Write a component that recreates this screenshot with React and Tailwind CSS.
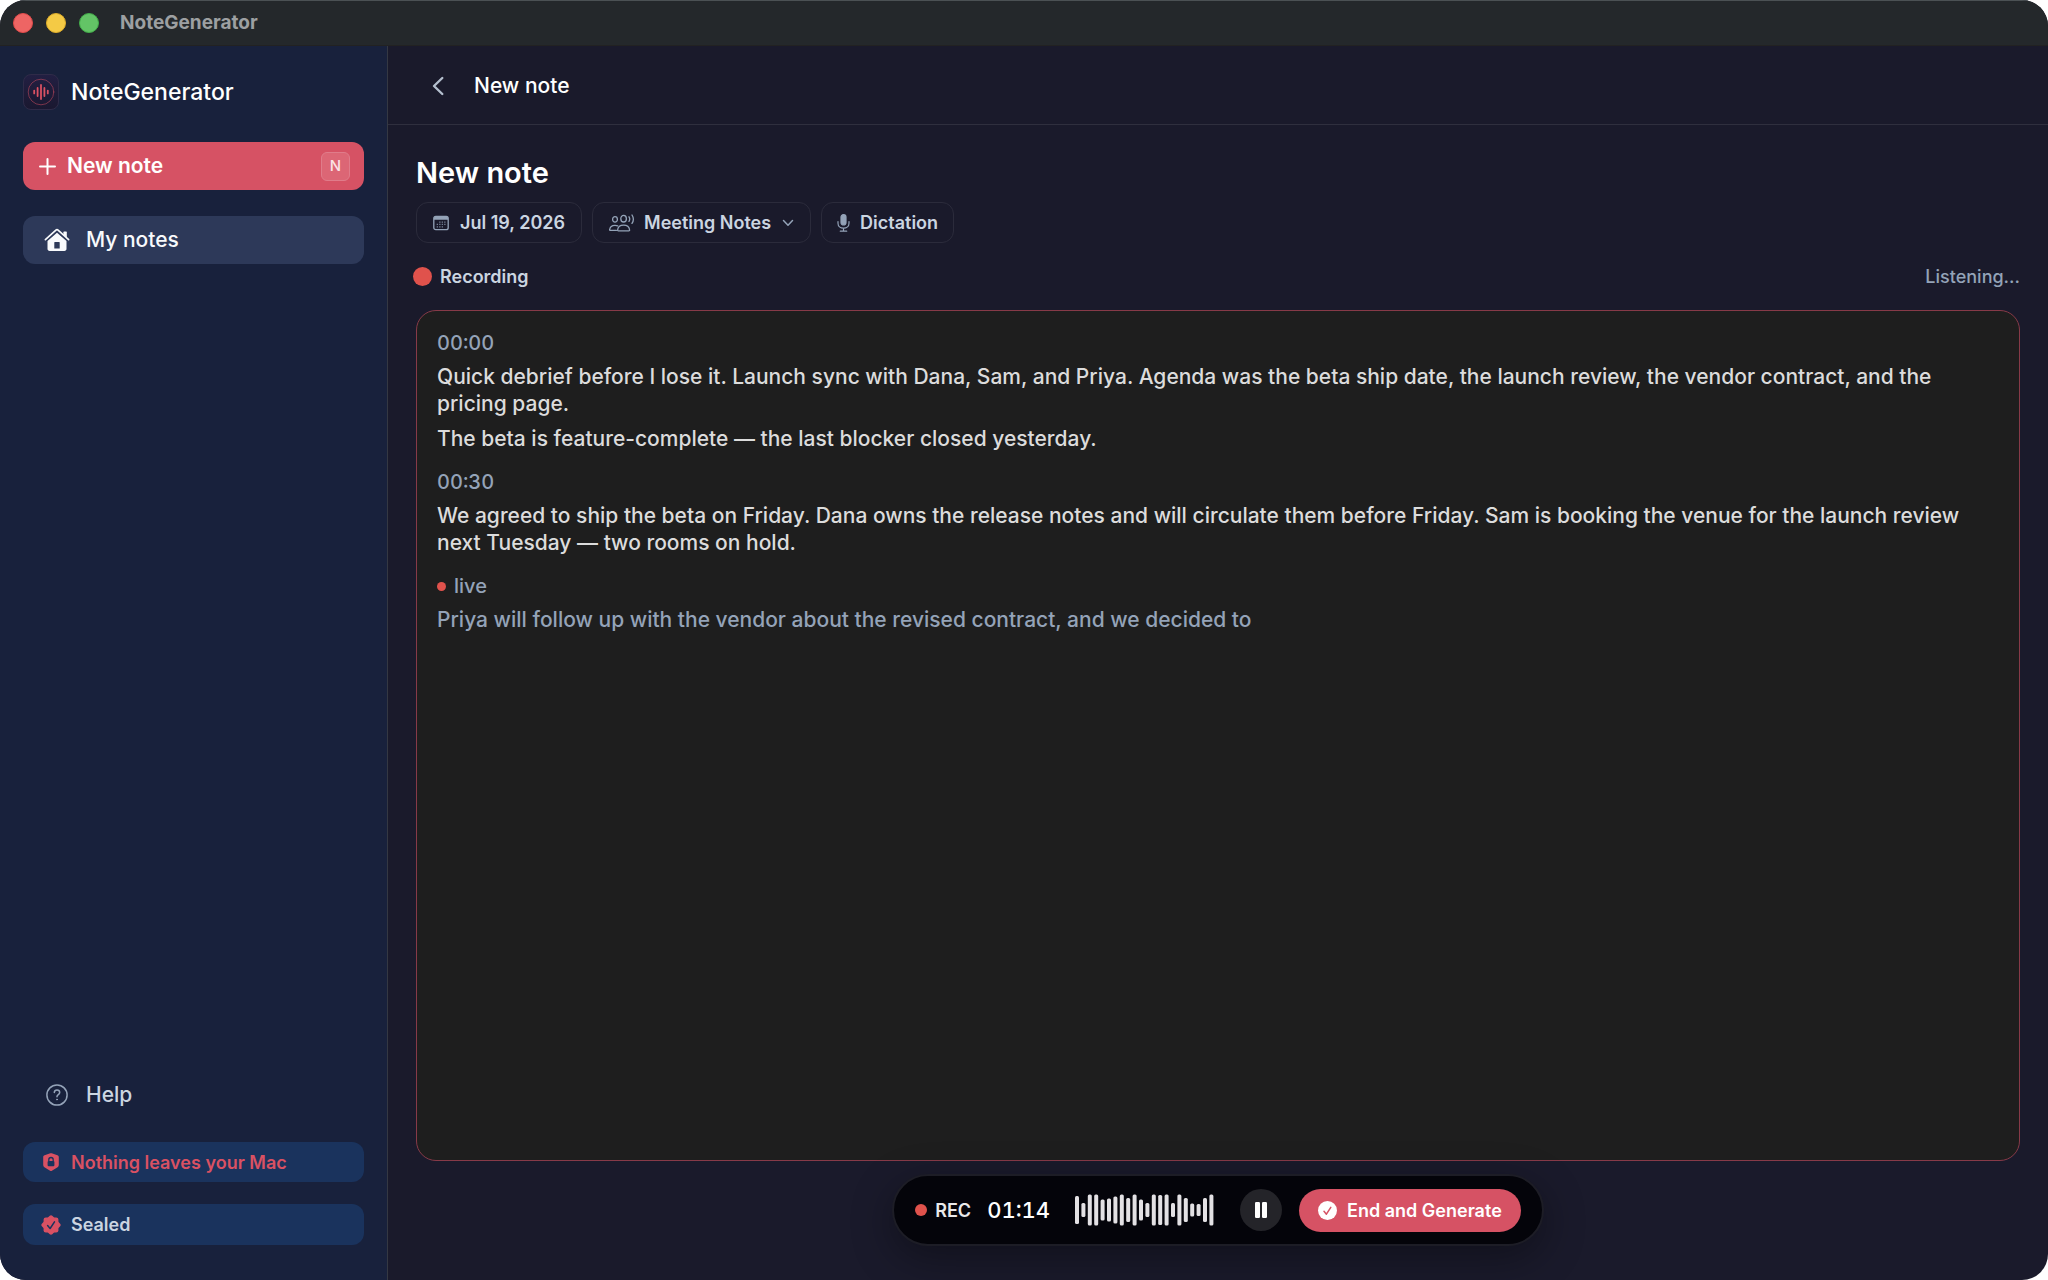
import React from "react";

const CalendarIcon = () => (
  <svg width="16" height="16" viewBox="0 0 16 16" fill="none" aria-hidden="true">
    <rect x="0.8" y="1.3" width="14.4" height="13.4" rx="2" stroke="currentColor" strokeWidth="1.3" />
    <path d="M1 3a2 2 0 0 1 2-2h10a2 2 0 0 1 2 2v1.8H1z" fill="currentColor" />
    <g fill="currentColor" opacity="0.75">
      <path d="M6.2 6.4h1.3v1.3H6.2zM8.7 6.4H10v1.3H8.7zM11.2 6.4h1.3v1.3h-1.3zM3.7 8.8H5v1.3H3.7zM6.2 8.8h1.3v1.3H6.2zM8.7 8.8H10v1.3H8.7zM11.2 8.8h1.3v1.3h-1.3zM3.7 11.2H5v1.3H3.7zM6.2 11.2h1.3v1.3H6.2zM8.7 11.2H10v1.3H8.7z" />
    </g>
  </svg>
);

const PeopleIcon = () => (
  <svg width="26" height="18" viewBox="0 0 26 18" fill="none" stroke="currentColor" strokeWidth="1.3" strokeLinecap="round" strokeLinejoin="round" aria-hidden="true">
    <ellipse cx="6" cy="5.4" rx="2.4" ry="2.8" />
    <path d="M7.4 16.4H1.3C.8 16.4 .6 16 .7 15.500 1 12.900 3.200 11.300 6 11.300c1 0 1.900.2 2.700.6" />
    <ellipse cx="14.6" cy="4.700" rx="2.800" ry="3.300" />
    <path d="M9.400 16.800h10.400c.6 0 .9-.3.8-.9-.4-2.900-2.800-4.700-6-4.700s-5.600 1.800-6 4.700c-.1.600.200.9.8.9z" />
    <path d="M20 2.800c.9 1.400.9 3.200 0 4.600M23 1c1.700 2.600 1.700 5.800 0 8.400" />
  </svg>
);

const MicIcon = () => (
  <svg width="13" height="18" viewBox="0 0 13 18" fill="none" stroke="currentColor" strokeWidth="1.2" strokeLinecap="round" aria-hidden="true">
    <rect x="4" y="0.600" width="5" height="10.400" rx="2.500" fill="currentColor" />
    <path d="M1 7.500v1.700c0 3 2.300 5 5.500 5s5.500-2 5.500-5V7.500M6.500 14.200v2.800M3.300 17.200h6.400" />
  </svg>
);

const HouseIcon = () => (
  <svg width="26" height="24" viewBox="0 0 26 24" aria-hidden="true">
    <path d="M1.400 11.600 11.900 2.200c.7-.6 1.500-.6 2.200 0l10.500 9.400" fill="none" stroke="currentColor" strokeWidth="1.700" strokeLinecap="round" />
    <path d="M20 3.600h2.200c.4 0 .6.2.6.6v5.200L19.400 6.300V4.200c0-.4.200-.6.6-.6z" fill="currentColor" />
    <path fillRule="evenodd" d="M13 4.700 22.500 13v7.800c0 1.300-.8 2.100-2.100 2.100H5.600c-1.300 0-2.100-.8-2.100-2.100V13zM10.300 14.500v6h5.400v-6c0-.3-.2-.5-.5-.5h-4.400c-.3 0-.5.200-.5.500z" fill="currentColor" />
  </svg>
);

const HelpIcon = () => (
  <svg width="22" height="22" viewBox="0 0 22 22" fill="none" stroke="currentColor" strokeLinecap="round" aria-hidden="true">
    <circle cx="11" cy="11" r="10.100" strokeWidth="1.500" />
    <path d="M8.300 8.500c.1-1.500 1.200-2.400 2.700-2.400s2.700.9 2.700 2.300c0 1-.5 1.600-1.400 2.200-.9.600-1.300 1-1.300 1.900v.3" strokeWidth="1.500" />
    <circle cx="11" cy="15.500" r="0.500" fill="currentColor" strokeWidth="0.900" />
  </svg>
);

const ShieldLockIcon = () => (
  <svg width="16" height="18" viewBox="0 0 16 18" aria-hidden="true">
    <path fill="#d95163" d="M8.700.3 14.400 2.200c.9.300 1.400.8 1.400 1.800v8c0 1-.4 1.700-1.200 2.200l-5.700 3.500c-.6.300-1.200.3-1.800 0l-5.700-3.500C.6 13.700.2 13 .2 12V4c0-1 .5-1.500 1.400-1.800L7.300.3c.5-.2.900-.2 1.400 0z" />
    <path d="M5.800 8.300V6.700a2.200 2.200 0 0 1 4.400 0v1.600" fill="none" stroke="#1a335d" strokeWidth="1.300" />
    <rect x="4.600" y="7.900" width="6.800" height="5.400" rx="1" fill="#1a335d" />
  </svg>
);

const SealIcon = () => (
  <svg width="20" height="20" viewBox="0 0 20 20" aria-hidden="true">
    <g fill="#d95163">
      <rect x="2.600" y="2.600" width="14.800" height="14.800" rx="2.200" />
      <rect x="2.600" y="2.600" width="14.800" height="14.800" rx="2.200" transform="rotate(45 10 10)" />
    </g>
    <path d="m6.600 10.600 2.500 2.900 4.400-6.700" fill="none" stroke="#1a335d" strokeWidth="1.500" strokeLinecap="round" strokeLinejoin="round" />
  </svg>
);

const LogoIcon = () => (
  <svg width="28" height="28" viewBox="0 0 28 28" fill="none" strokeLinecap="round" aria-hidden="true">
    <circle cx="14" cy="14" r="12.800" stroke="#d95163" strokeOpacity="0.500" strokeWidth="1" />
    <path d="M7.200 12.600v2.800M10.600 10v8M14 7v14M17.400 10v8M20.800 12.600v2.800" stroke="#d95163" strokeWidth="1.800" />
  </svg>
);

const levels = [28, 14, 31, 31, 21, 23, 27, 31, 24, 31, 21, 14, 31, 30, 31, 14, 31, 24, 13, 12, 24, 31];

const Waveform = () => (
  <svg width="139" height="32" viewBox="0 0 139 32" fill="#e3e1e4" aria-hidden="true">
    {levels.map((h, i) => (
      <rect key={i} x={i * 6.4} y={16 - h / 2} width="4" height={h} rx="1.500" />
    ))}
  </svg>
);

const chip = "flex h-[41px] items-center rounded-xl border border-[#2b2b3b] text-[18px] font-semibold text-[#cbd5e1]";

function TitleBar() {
  return (
    <header className="flex h-[46px] shrink-0 items-center border-t border-b border-t-[#4b5154] border-b-[#222222] bg-[#24282b] px-[13px]">
      <div className="flex gap-[13px]">
        <button aria-label="Close" className="size-5 rounded-full border border-[#e24b4b] bg-[#ee6564]" />
        <button aria-label="Minimize" className="size-5 rounded-full border border-[#dfae2a] bg-[#f4ca45]" />
        <button aria-label="Zoom" className="size-5 rounded-full border border-[#43ae4a] bg-[#63c466]" />
      </div>
      <span className="ml-[21px] text-[19px] font-bold text-[#9da0a2]">NoteGenerator</span>
    </header>
  );
}

function Sidebar() {
  return (
    <aside className="flex w-[388px] shrink-0 flex-col border-r border-[#343843] bg-[#18213c] px-[23px] pt-7 pb-[35px]">
      <div className="flex items-center gap-3">
        <div className="flex size-9 items-center justify-center rounded-lg border border-[#2f2b48] bg-linear-to-b from-[#221f42] to-[#1a1830]">
          <LogoIcon />
        </div>
        <span className="text-[23px] font-medium text-white">NoteGenerator</span>
      </div>
      <button className="mt-8 flex h-12 items-center rounded-xl bg-[#d65264] pr-[14px] pl-4 text-white">
        <svg width="17" height="17" viewBox="0 0 17 17" stroke="currentColor" strokeWidth="2" strokeLinecap="round" aria-hidden="true">
          <path d="M8.500 1v15M1 8.500h15" />
        </svg>
        <span className="ml-[11px] text-[21px] font-semibold">New note</span>
        <kbd className="ml-auto flex size-[29px] items-center justify-center rounded-md border border-[#e07c8a] bg-[#dc6675] font-[Inter] text-[15px] font-medium text-[#fbe3e6]">N</kbd>
      </button>
      <nav className="mt-[26px] flex flex-1 flex-col justify-between">
        <a href="#notes" aria-current="page" className="flex h-12 items-center gap-4 rounded-xl bg-[#2d3959] px-[21px] text-[21px] font-medium text-[#f8fafc]">
          <HouseIcon />
          My notes
        </a>
        <a href="#help" className="flex h-12 items-center gap-[18px] px-[23px] text-[21px] font-medium text-[#cbd5e1]">
          <span className="text-[#94a3b8]"><HelpIcon /></span>
          Help
        </a>
      </nav>
      <div className="mt-[23px] flex h-10 items-center rounded-xl bg-[#1a335d] pl-5 text-[18px] font-semibold text-[#d95163]">
        <ShieldLockIcon />
        <span className="ml-3">Nothing leaves your Mac</span>
      </div>
      <div className="mt-[22px] flex h-[41px] items-center rounded-xl bg-[#1a335d] pl-[18px] text-[18px] font-semibold text-[#cbd5e1]">
        <SealIcon />
        <span className="ml-[10px]">Sealed</span>
      </div>
    </aside>
  );
}

function Chips() {
  return (
    <div className="mt-[11px] flex gap-[10px]">
      <button className={chip + " gap-[11px] px-4"}>
        <span className="text-[#94a3b8]"><CalendarIcon /></span>
        Jul 19, 2026
      </button>
      <label className={chip + " px-4"}>
        <span className="text-[#94a3b8]"><PeopleIcon /></span>
        <select aria-label="Template" className="ml-[9px] appearance-none bg-transparent font-semibold outline-none">
          <option>Meeting Notes</option>
        </select>
        <svg className="ml-[10px] text-[#94a3b8]" width="12" height="8" viewBox="0 0 12 8" fill="none" stroke="currentColor" strokeWidth="1.500" strokeLinecap="round" strokeLinejoin="round" aria-hidden="true">
          <path d="m1.500 1.500 4.500 4.700 4.500-4.700" />
        </svg>
      </label>
      <button className={chip + " gap-[10px] px-[15px]"}>
        <span className="text-[#94a3b8]"><MicIcon /></span>
        Dictation
      </button>
    </div>
  );
}

function Transcript() {
  return (
    <section aria-label="Transcript" className="mt-[22px] flex-1 rounded-[20px] border border-[#873a48] bg-[#1e1e1e] p-5 text-[21px] leading-[27px] font-medium text-[#dcdcdc]">
      <time className="block text-[20px] leading-6 text-[#94a3b8] tabular-nums">00:00</time>
      <p className="mt-2">
        Quick debrief before I lose it. Launch sync with Dana, Sam, and Priya. Agenda was the beta ship date, the launch review, the vendor contract, and the pricing page.
      </p>
      <p className="mt-2">The beta is feature-complete — the last blocker closed yesterday.</p>
      <time className="mt-[18px] block text-[20px] leading-6 text-[#94a3b8] tabular-nums">00:30</time>
      <p className="mt-2">
        We agreed to ship the beta on Friday. Dana owns the release notes and will circulate them before Friday. Sam is booking the venue for the launch review next Tuesday — two rooms on hold.
      </p>
      <div className="mt-[18px] flex items-center gap-2 text-[20px] leading-6 text-[#94a3b8]">
        <span className="size-[9px] rounded-full bg-[#e0524c]" />
        live
      </div>
      <p className="mt-2 text-[#94a3b8]">Priya will follow up with the vendor about the revised contract, and we decided to</p>
    </section>
  );
}

function RecorderBar() {
  return (
    <div className="mt-[13px] flex h-[72px] items-center self-center rounded-full border-2 border-[#1d1d26] bg-[#04040a] px-[21px] text-white shadow-[0_12px_40px_rgba(0,0,0,0.35)]">
      <span className="size-3 rounded-full bg-[#e0524c]" />
      <span className="ml-2 text-[18px] font-semibold text-[#e9e9ea]">REC</span>
      <time className="ml-4 text-[22px] font-medium tabular-nums">01:14</time>
      <div className="ml-[25px]"><Waveform /></div>
      <button aria-label="Pause" className="ml-[26px] flex size-[42px] items-center justify-center rounded-full bg-[#242429]">
        <svg width="12" height="16" viewBox="0 0 12 16" fill="white" aria-hidden="true">
          <rect width="5" height="16" rx="1.200" />
          <rect x="7" width="5" height="16" rx="1.200" />
        </svg>
      </button>
      <button className="ml-[17px] flex h-[43px] items-center gap-[10px] rounded-full bg-[#d65264] px-[19px] text-[18px] font-semibold">
        <svg width="19" height="19" viewBox="0 0 19 19" fill="none" aria-hidden="true">
          <circle cx="9.500" cy="9.500" r="9.500" fill="white" />
          <path d="m6 10.300 2.400 2.900 4.400-6.900" stroke="#d65264" strokeWidth="1.500" strokeLinecap="round" strokeLinejoin="round" />
        </svg>
        End and Generate
      </button>
    </div>
  );
}

export default function App() {
  return (
    <div className="min-h-screen bg-white font-[Inter,sans-serif]">
      <div className="flex min-h-screen flex-col overflow-hidden rounded-[26px] bg-[#1a1a2b]">
        <TitleBar />
        <div className="flex flex-1">
          <Sidebar />
          <main className="flex min-w-0 flex-1 flex-col">
            <div className="flex h-[79px] items-center border-b border-[#2f2f3e] pt-px pl-11">
              <button aria-label="Back" className="text-[#b4bfce]">
                <svg width="12" height="20" viewBox="0 0 12 20" fill="none" stroke="currentColor" strokeWidth="2.400" strokeLinecap="round" strokeLinejoin="round" aria-hidden="true">
                  <path d="M10.300 2 2 10l8.300 8" />
                </svg>
              </button>
              <h1 className="ml-[30px] text-[21px] font-medium text-white">New note</h1>
            </div>
            <div className="flex flex-1 flex-col px-7 pt-[30px] pb-[34px]">
              <h2 className="text-[29px] leading-9 font-semibold text-white">New note</h2>
              <Chips />
              <div className="mt-[21px] flex h-6 items-center justify-between text-[18px] font-medium">
                <div className="flex items-center gap-2 font-semibold text-[#cbd5e1]">
                  <span className="-ml-[3px] size-[19px] rounded-full bg-[#e0524c]" />
                  Recording
                </div>
                <span className="text-[#94a3b8]">Listening...</span>
              </div>
              <Transcript />
              <RecorderBar />
            </div>
          </main>
        </div>
      </div>
    </div>
  );
}
